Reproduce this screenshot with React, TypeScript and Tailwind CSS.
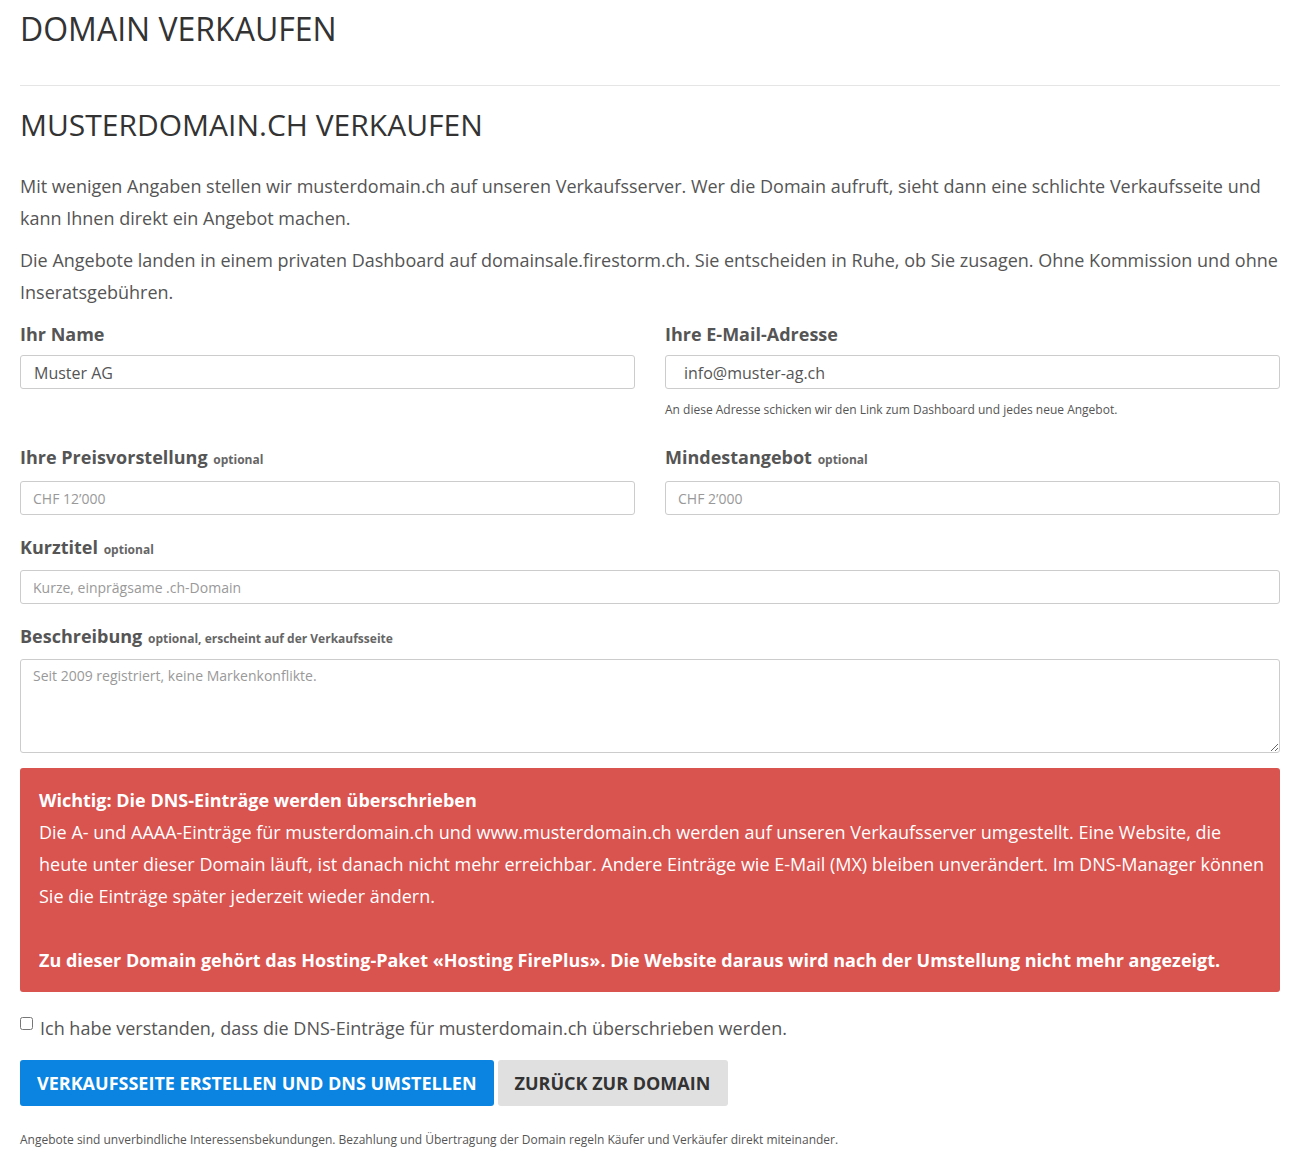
import { useState } from 'react'

const labelCls = "block font-bold text-[18px] leading-[24px] text-[#555]"
const optCls = "text-[12px] font-bold text-[#666] ml-[1px]"
const inputCls =
  "block w-full h-[34px] border border-[#ccc] rounded-[3px] bg-white text-[#555] outline-none placeholder:text-[#999]"

const App = () => {
  const [name, setName] = useState('Muster AG')
  const [email, setEmail] = useState('info@muster-ag.ch')
  const [agreed, setAgreed] = useState(false)

  return (
    <div className="w-[1260px] ml-[20px] bg-white text-[#555] font-['Open_Sans',sans-serif]">
      <h1 className="pt-[11px] text-[32px] leading-[36px] text-[#333] font-normal">DOMAIN VERKAUFEN</h1>
      <hr className="mt-[38px] border-0 border-t border-[#e5e5e5]" />
      <h2 className="mt-[22px] text-[30px] leading-[34px] text-[#333] font-normal">MUSTERDOMAIN.CH VERKAUFEN</h2>

      <p className="mt-[28px] text-[18px] leading-[32px]">
        Mit wenigen Angaben stellen wir musterdomain.ch auf unseren Verkaufsserver. Wer die Domain aufruft, sieht dann
        eine schlichte Verkaufsseite und kann Ihnen direkt ein Angebot machen.
      </p>
      <p className="mt-[10px] text-[18px] leading-[32px]">
        Die Angebote landen in einem privaten Dashboard auf domainsale.firestorm.ch. Sie entscheiden in Ruhe, ob Sie
        zusagen. Ohne Kommission und ohne Inseratsgebühren.
      </p>

      <form className="mt-[14px]" onSubmit={(event) => event.preventDefault()}>
        <div className="grid grid-cols-2 gap-x-[30px] mb-[26px]">
          <div>
            <label className={`${labelCls} mb-[9px]`}>Ihr Name</label>
            <input
              className={`${inputCls} px-[13px] pt-[1px] text-[16px]`}
              value={name}
              onChange={(event) => setName(event.target.value)}
            />
          </div>
          <div>
            <label className={`${labelCls} mb-[9px]`}>Ihre E-Mail-Adresse</label>
            <input
              className={`${inputCls} px-[18px] pt-[1px] text-[16px]`}
              value={email}
              onChange={(event) => setEmail(event.target.value)}
            />
            <p className="mt-[12px] text-[12px] leading-[18px] text-[#555]">
              An diese Adresse schicken wir den Link zum Dashboard und jedes neue Angebot.
            </p>
          </div>
        </div>

        <div className="grid grid-cols-2 gap-x-[30px] mb-[20px]">
          <div>
            <label className={`${labelCls} mb-[9px]`}>
              Ihre Preisvorstellung <span className={optCls}>optional</span>
            </label>
            <input className={`${inputCls} px-[12px] text-[14px]`} placeholder="CHF 12’000" />
          </div>
          <div>
            <label className={`${labelCls} mb-[9px]`}>
              Mindestangebot <span className={optCls}>optional</span>
            </label>
            <input className={`${inputCls} px-[12px] text-[14px]`} placeholder="CHF 2’000" />
          </div>
        </div>

        <div className="mb-[20px]">
          <label className={`${labelCls} mb-[8px]`}>
            Kurztitel <span className={optCls}>optional</span>
          </label>
          <input className={`${inputCls} px-[12px] text-[14px]`} placeholder="Kurze, einprägsame .ch-Domain" />
        </div>

        <div className="mb-[15px]">
          <label className={`${labelCls} mb-[8px]`}>
            Beschreibung <span className={optCls}>optional, erscheint auf der Verkaufsseite</span>
          </label>
          <textarea
            className="block w-full h-[94px] border border-[#ccc] rounded-[3px] px-[12px] py-[6px] text-[14px] leading-[20px] text-[#555] outline-none placeholder:text-[#999]"
            placeholder="Seit 2009 registriert, keine Markenkonflikte."
          />
        </div>

        <div className="bg-[#d9534f] rounded-[3px] pl-[19px] pr-[12px] py-[16px] text-white text-[18px] leading-[32px]">
          <strong className="font-bold">Wichtig: Die DNS-Einträge werden überschrieben</strong>
          <br />
          Die A- und AAAA-Einträge für musterdomain.ch und www.musterdomain.ch werden auf unseren Verkaufsserver
          umgestellt. Eine Website, die heute unter dieser Domain läuft, ist danach nicht mehr erreichbar. Andere
          Einträge wie E-Mail (MX) bleiben unverändert. Im DNS-Manager können Sie die Einträge später jederzeit wieder
          ändern.
          <br />
          <br />
          <strong className="font-bold">
            Zu dieser Domain gehört das Hosting-Paket «Hosting FirePlus». Die Website daraus wird nach der Umstellung
            nicht mehr angezeigt.
          </strong>
        </div>

        <label className="mt-[20px] flex items-start gap-[7px] text-[18px] leading-[32px]">
          <input
            type="checkbox"
            className="mt-[5px] w-[13px] h-[13px]"
            checked={agreed}
            onChange={(event) => setAgreed(event.target.checked)}
          />
          Ich habe verstanden, dass die DNS-Einträge für musterdomain.ch überschrieben werden.
        </label>

        <div className="mt-[16px] flex gap-[4px]">
          <button
            type="submit"
            className="h-[46px] px-[17px] bg-[#0a84e0] text-white font-bold text-[18px] uppercase rounded-[3px]"
          >
            Verkaufsseite erstellen und DNS umstellen
          </button>
          <button type="button" className="h-[46px] pl-[17px] pr-[18px] bg-[#e0e0e0] text-[#333] font-bold text-[18px] uppercase rounded-[3px]">
            Zurück zur Domain
          </button>
        </div>

        <p className="mt-[26px] text-[12px] leading-[16px] text-[#555]">
          Angebote sind unverbindliche Interessensbekundungen. Bezahlung und Übertragung der Domain regeln Käufer und
          Verkäufer direkt miteinander.
        </p>
      </form>
    </div>
  )
}

export default App
